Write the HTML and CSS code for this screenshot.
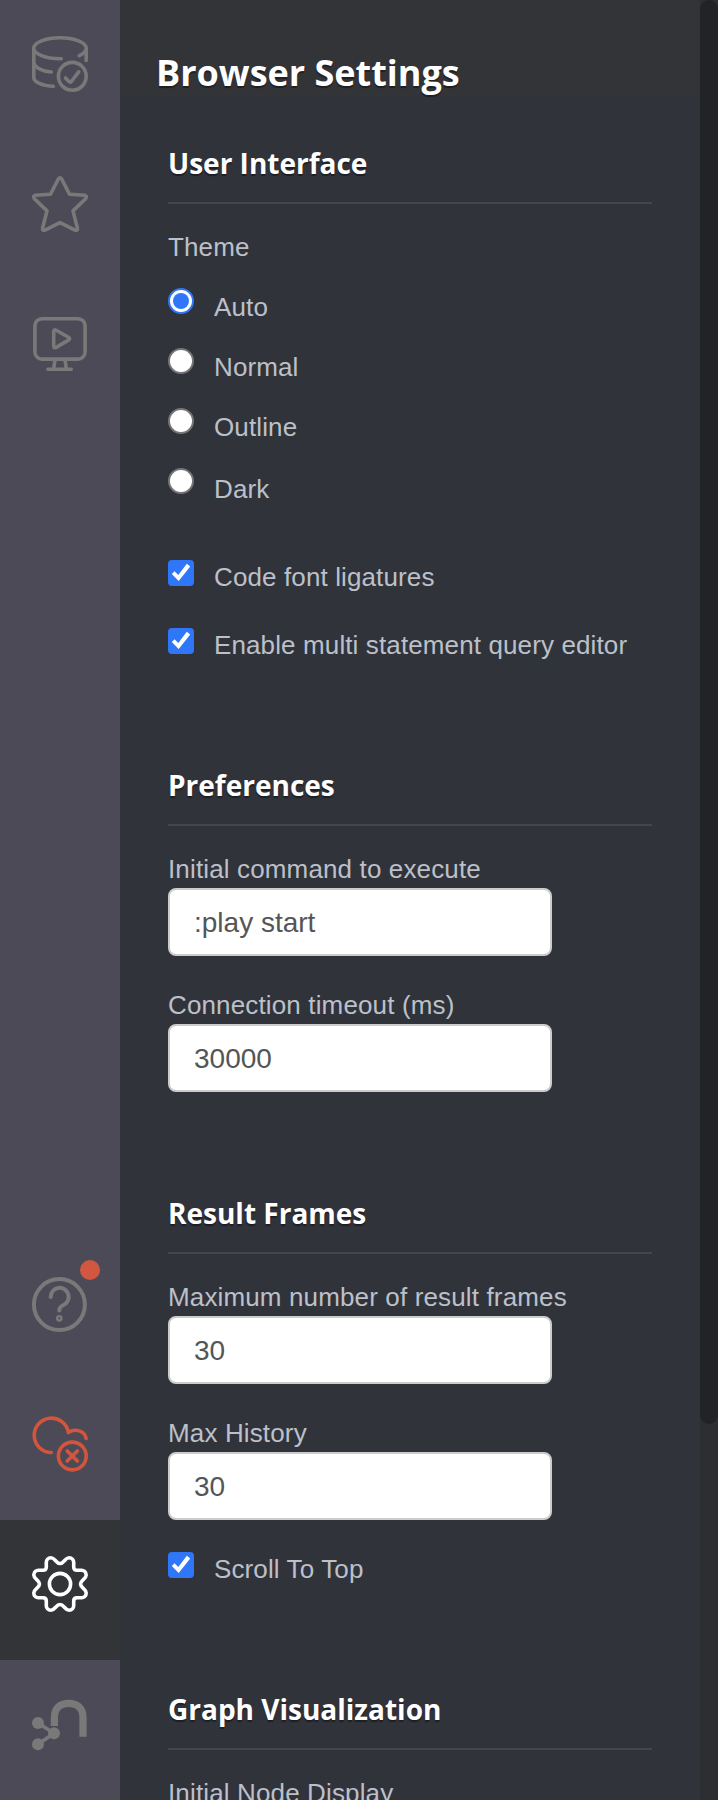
FILE: index.html
```html
<!DOCTYPE html>
<html lang="en">
<head>
<meta charset="utf-8">
<title>Browser Settings</title>
<link rel="stylesheet" href="styles.css">
</head>
<body>
<div class="app">
  <nav class="sidebar">
    <div class="group">
      <a class="nav-item"><svg class="icon" viewBox="0 0 56 56"><path d="M29.300 22.700 28 22.700C13.500 22.700 1.800 18 1.800 12.300S13.500 1.800 28 1.800 54.200 6.500 54.200 12.300C54.200 15.200 51.500 17.800 47.300 19.700M54.200 12.300V24.500M1.800 12.300V41.500C1.800 46 10 49.800 21.300 50.300M1.800 26.500C2.500 31.500 10 35.200 19.200 36"/><circle cx="40.300" cy="40.300" r="13.900"/><path d="M33.500 42 37.200 45.700Q38.300 46.700 39.300 45.500L46.700 35.800"/></svg></a>
      <a class="nav-item"><svg class="icon" viewBox="0 0 56 56"><path d="M26.300 3Q28 .800 29.700 3L37.500 18.200 52.500 19.300Q55.800 20 53.600 22.700L41 34.900 45.400 52Q45.800 55.100 43 54.100L28 46.600 13 54.100Q10.200 55.100 10.600 52L15 34.900 2.400 22.700Q.200 20 3.500 19.300L18.500 18.200Z"/></svg></a>
      <a class="nav-item"><svg class="icon" viewBox="0 0 56 56"><rect x="2.900" y="2.700" width="50.200" height="40.400" rx="7"/><path d="M21.700 15.800Q21.700 13 24.200 14.300L36.500 21.300Q38.600 22.700 36.500 24.100L24.200 31.400Q21.700 32.700 21.700 30ZM23 44 21.700 52.500M33 44 34.300 52.500M15.900 53.200H39.300"/></svg></a>
    </div>
    <div class="group">
      <a class="nav-item"><svg class="icon thick" viewBox="0 0 56 56"><circle cx="27.400" cy="28.600" r="25.500"/><path d="M18.700 21A9 9 0 1 1 31.500 29Q27.300 31 27.300 34.400"/><circle class="thin" cx="27.300" cy="42.300" r="2.200"/></svg><span class="badge"></span></a>
      <a class="nav-item error"><svg class="icon" viewBox="0 0 56 56"><path d="M19.300 36.500A17.200 17.200 0 1 1 36.400 16.500C43 12.200 52.500 14.500 54.100 22.500"/><circle cx="40.300" cy="40" r="13.900"/><path d="M35.200 34.900 45.400 45.100M45.400 34.900 35.200 45.100"/></svg></a>
      <a class="nav-item active"><svg class="icon" viewBox="-28 -28 56 56"><path d="M0-20.500C4-20.500 4.800-26.200 9-26.200 12-26.200 13.700-24 13.700-21.500V-17Q13.700-13.700 17-13.700H21.500C24-13.700 26.200-12 26.200-9 26.200-4.800 20.500-4 20.500 0 20.500 4 26.200 4.800 26.200 9 26.200 12 24 13.700 21.500 13.700H17Q13.700 13.700 13.700 17V21.500C13.700 24 12 26.200 9 26.200 4.800 26.200 4 20.500 0 20.500-4 20.500-4.800 26.200-9 26.200-12 26.200-13.700 24-13.700 21.500V17Q-13.700 13.700-17 13.700H-21.500C-24 13.700-26.200 12-26.200 9-26.200 4.800-20.500 4-20.500 0-20.500-4-26.200-4.800-26.200-9-26.200-12-24-13.700-21.500-13.700H-17Q-13.700-13.700-13.700-17V-21.500C-13.700-24-12-26.200-9-26.200-4.800-26.200-4-20.500 0-20.500Z"/><circle r="10.600"/></svg></a>
      <a class="nav-item"><svg class="icon brand" viewBox="0 0 56 56"><path class="arch" d="M22.400 30V21.500C22.400 12 28 7.300 36.700 7.300S51 12 51 21.500V40.700"/><path d="M6 27 22 37.300 6 48.300"/><circle cx="6" cy="27" r="6"/><circle cx="22" cy="37.300" r="6"/><circle cx="6" cy="48.300" r="6"/></svg></a>
    </div>
  </nav>

  <main class="drawer">
    <header class="drawer-header"><h1>Browser Settings</h1></header>
    <div class="sections">
      <section class="section">
        <h2>User Interface</h2>
        <div class="field-label">Theme</div>
        <div class="radios">
          <label class="option"><input type="radio" name="theme" checked><span>Auto</span></label>
          <label class="option"><input type="radio" name="theme"><span>Normal</span></label>
          <label class="option"><input type="radio" name="theme"><span>Outline</span></label>
          <label class="option"><input type="radio" name="theme"><span>Dark</span></label>
        </div>
        <div class="checks">
          <label class="option"><input type="checkbox" checked><span>Code font ligatures</span></label>
          <label class="option"><input type="checkbox" checked><span>Enable multi statement query editor</span></label>
        </div>
      </section>
      <section class="section">
        <h2>Preferences</h2>
        <label class="field"><span class="field-label">Initial command to execute</span><input class="text" type="text" value=":play start"></label>
        <label class="field"><span class="field-label">Connection timeout (ms)</span><input class="text" type="text" value="30000"></label>
      </section>
      <section class="section">
        <h2>Result Frames</h2>
        <label class="field"><span class="field-label">Maximum number of result frames</span><input class="text" type="text" value="30"></label>
        <label class="field"><span class="field-label">Max History</span><input class="text" type="text" value="30"></label>
        <div class="checks after-field">
          <label class="option"><input type="checkbox" checked><span>Scroll To Top</span></label>
        </div>
      </section>
      <section class="section">
        <h2>Graph Visualization</h2>
        <label class="field"><span class="field-label">Initial Node Display</span><input class="text" type="text" value="300"></label>
      </section>
    </div>
  </main>
  <div class="scroll-track"><div class="scroll-thumb"></div></div>
</div>
</body>
</html>
```
FILE: styles.css
```css
* { box-sizing: border-box; }

body {
  margin: 0;
  height: 1800px;
  overflow: hidden;
  background: #31333b;
  color: #bcc0c9;
  font-family: "Liberation Sans", Arial, sans-serif;
  font-size: 26px;
}

.app {
  display: flex;
  height: 1800px;
  overflow: hidden;
}

/* Sidebar */
.sidebar {
  width: 120px;
  flex: none;
  display: flex;
  flex-direction: column;
  justify-content: space-between;
  background: #4d4a57;
}

.nav-item {
  position: relative;
  display: block;
  height: 140px;
  padding: 36px 32px;
  color: #797979;
}
.nav-item.error { color: #d2553d; }
.nav-item.active { color: #fff; background: #333438; }

.icon {
  display: block;
  width: 56px;
  height: 56px;
  overflow: visible;
  fill: none;
  stroke: currentColor;
  stroke-width: 3.6;
  stroke-linecap: round;
  stroke-linejoin: round;
}
.icon.thick { stroke-width: 4; }
.icon .thin { stroke-width: 2.4; }
.icon.brand circle { fill: currentColor; stroke: none; }
.icon.brand .arch { stroke-width: 7.2; stroke-linecap: butt; }

.badge {
  position: absolute;
  top: 20px;
  left: 80px;
  width: 20px;
  height: 20px;
  border-radius: 50%;
  background: #d25740;
}

/* Drawer */
.drawer {
  flex: 1;
  min-width: 0;
}
.drawer-header {
  height: 96px;
  padding: 49px 36px 0;
  background: #333438;
}
h1, h2 {
  margin: 0;
  color: #fff;
  font-family: "Open Sans", sans-serif;
  font-weight: 700;
  text-shadow: 0 2px 1px rgba(0, 0, 0, .4);
}
h1 { font-size: 36px; line-height: 48px; }
h2 {
  margin-bottom: 28px;
  padding-bottom: 20px;
  border-bottom: 2px solid #44464f;
  font-size: 28px;
  line-height: 38px;
}

.sections {
  display: flex;
  flex-direction: column;
  gap: 102px;
  padding: 48px 48px 0;
}

.field-label {
  display: block;
  line-height: 30px;
  letter-spacing: .14px;
}
.field { display: block; }
.field + .field { margin-top: 34px; }

.text {
  display: block;
  width: 384px;
  height: 68px;
  margin: 4px 0 0;
  padding: 2px 24px 0;
  border: 2px solid #ccc;
  border-radius: 8px;
  background: #fff;
  color: #555;
  font: 28px "Liberation Sans", Arial, sans-serif;
}

/* Radios and checkboxes */
.radios { margin-top: 26px; }
.option {
  display: flex;
  align-items: flex-start;
  gap: 20px;
  height: 60px;
  line-height: 30px;
  letter-spacing: .12px;
}
.option span { padding-top: 4px; }
.radios .option:last-child span { padding-top: 6px; }

.checks { margin-top: 32px; }
.checks.after-field { margin-bottom: -20px; }
.checks .option { height: 68px; }
.checks .option:last-child { height: 36px; }
.checks .option span { padding-top: 2px; }
.checks.after-field .option { height: 56px; }

input[type="radio"],
input[type="checkbox"] {
  appearance: none;
  flex: none;
  width: 26px;
  height: 26px;
  margin: 0;
}
input[type="radio"] {
  border: 2px solid #767676;
  border-radius: 50%;
  background: #fff;
}
input[type="radio"]:checked {
  padding: 3px;
  border-color: #2f77f8;
}
input[type="radio"]:checked::before {
  content: "";
  display: block;
  height: 16px;
  border-radius: 50%;
  background: #2f77f8;
}
input[type="checkbox"] {
  border-radius: 4px;
  background: #2f77f8;
}
input[type="checkbox"]::before {
  content: "";
  display: block;
  height: 26px;
  background: #fff;
  clip-path: polygon(3.8px 14px, 6.600px 11.200px, 10.300px 15px, 18.800px 3.800px, 22.200px 6.400px, 10.700px 21px);
}

/* Scrollbar */
.scroll-track {
  width: 18px;
  flex: none;
  background: #2d2e32;
}
.scroll-thumb {
  height: 1424px;
  border-radius: 9px;
  background: #222327;
}
```
